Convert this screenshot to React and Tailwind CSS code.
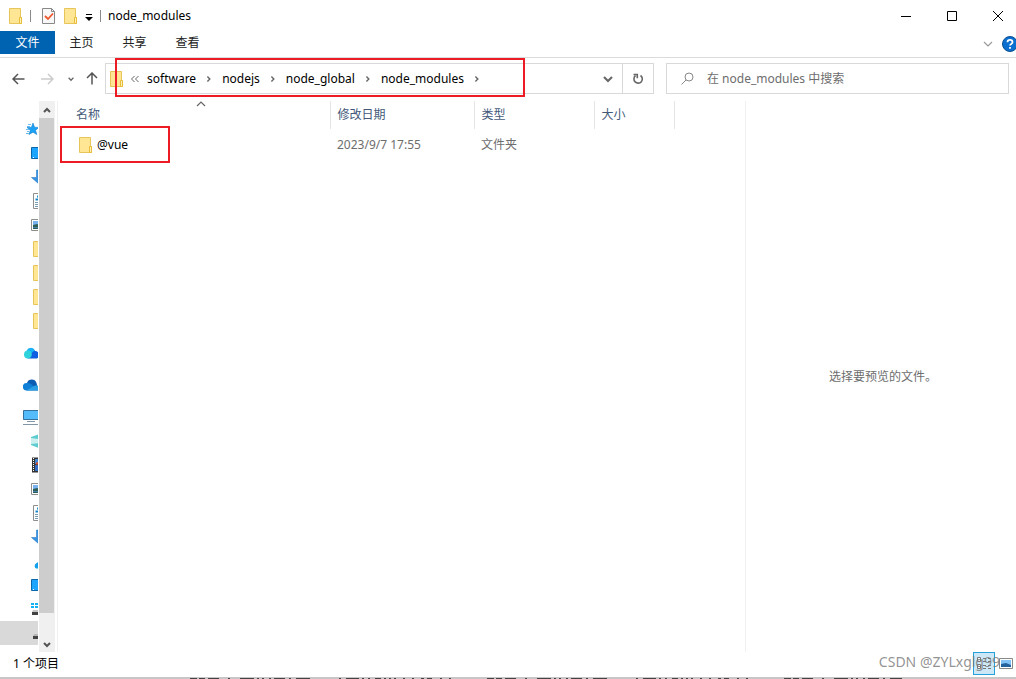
import { useState } from "react";

const crumbs = ["software", "nodejs", "node_global", "node_modules"];

const columns = [
  { name: "名称", width: "w-68" },
  { name: "修改日期", width: "w-36" },
  { name: "类型", width: "w-30" },
  { name: "大小", width: "w-20" },
];

const files = [{ name: "@vue", date: "2023/9/7 17:55", type: "文件夹" }];

const navGroups = [
  ["star", "desktop", "download", "doc", "picture", "folder", "folder", "folder", "folder"],
  ["cloudLight"],
  ["cloudDark"],
  ["pc", "box", "video", "picture", "doc", "download", "cloudSmall", "desktop", "drive", "disk"],
];

const topLevel = ["star", "cloudLight", "cloudDark", "pc"];

function Folder({ className }) {
  return (
    <svg width="14" height="16" viewBox="0 0 14 16" className={className}>
      <path d="M.5.5h11v9h1v6H.5z" fill="#ffe694" stroke="#e8c55b" />
      <path d="M10.5 9.500h2v6h-2z" fill="#fff0b5" stroke="#e8bd3c" />
    </svg>
  );
}

function Chevron({ d = "M1 3l4 4 4-4", size = 10, stroke = "#666", weight = 1.5, className }) {
  return (
    <svg width={size} height={size} viewBox="0 0 10 10" fill="none" stroke={stroke} strokeWidth={weight} className={className}>
      <path d={d} />
    </svg>
  );
}

function NavIcon({ kind }) {
  return (
    <svg width="16" height="16" viewBox="0 0 16 16" fill="none" className="shrink-0">
      {kind === "star" && (
        <>
          <path d="M10 2l1.500 4.200 4.500.3-3.500 2.700 1.300 4.300-3.800-2.300-4 2.300 1.300-4.400L4 6.500l4.500-.3z" fill="#1aa1f5" stroke="#1382cf" strokeWidth=".6" />
          <path d="M5 3.500h3M4 5.500h3M3 8.500h3M4 10.500h2M3 12.500h3" stroke="#6cbcec" />
        </>
      )}
      {kind === "desktop" && (
        <>
          <path d="M.5 2.500h15v11H.5z" fill="#1ba5ff" stroke="#0b67ad" />
          <path d="M2 12.500h1" stroke="#fff" />
        </>
      )}
      {kind === "download" && <path d="M5.500 1h5v7.500H15L8 15 .5 8.500h5z" fill="#3a93df" stroke="#2c7ec6" strokeWidth=".6" />}
      {kind === "doc" && (
        <>
          <path d="M2.500.5h11v15h-11z" fill="#fff" stroke="#8e8e8e" />
          <path d="M6 3.500h6M4.500 6.500h8" stroke="#1687c9" strokeWidth="2" />
          <path d="M4 9.500h8M4 11.500h8M4 13.500h8" stroke="#7c9eb5" />
        </>
      )}
      {kind === "picture" && (
        <>
          <path d="M.5 2.500h15v11H.5z" fill="#fff" stroke="#8e8e8e" />
          <path d="M2 4h12v8H2z" fill="#77b4ef" />
          <path d="M2 8l4-1 8 1v4H2z" fill="#315e58" />
          <path d="M2 10.500h12" stroke="#4380a8" />
        </>
      )}
      {kind === "folder" && <path d="M2.500.5h12v15h-12z" fill="#ffe694" stroke="#e8c55b" />}
      {kind === "cloudLight" && (
        <>
          <path d="M5 13.500a4 4 0 0 1-1-7.500 4.300 4.300 0 0 1 8 0 4 4 0 0 1 2 7.500z" fill="#0f5fe0" />
          <path d="M3.500 6.500a4.500 4.500 0 0 1 8.500-1c-2 1-3 2-4 3.500z" fill="#19b2f8" />
          <path d="M5 13.500a4 4 0 0 1 0-8c3 0 4.500 3 3.500 5.500-.6 1.500-2 2.500-3.500 2.500z" fill="#2fd3dc" />
        </>
      )}
      {kind === "cloudDark" && (
        <>
          <path d="M4 13.500a4 4 0 0 1 0-7.500 5 5 0 0 1 9.500 0l2 7.500z" fill="#0a5db2" />
          <path d="M3.500 13.500a3.700 3.700 0 0 1 0-7.400c3-.6 6 1.400 8 4.400z" fill="#0f7fd6" />
          <path d="M3 13.500l9-5a5 5 0 0 1 4 1v4z" fill="#2b9fe4" />
        </>
      )}
      {kind === "pc" && (
        <>
          <path d="M.5 1.500h17v9H.5z" fill="#55bcfb" stroke="#34719d" />
          <path d="M7 12.500h4M4 12.500h8M0 15.500h16" stroke="#8296a5" />
        </>
      )}
      {kind === "box" && (
        <>
          <path d="M0 4l8-3 8 3v8l-8 3-8-3z" fill="#5fcdd0" />
          <path d="M0 5l8 1 8-1v6l-8-1-8 1z" fill="#cdeff0" />
        </>
      )}
      {kind === "video" && (
        <>
          <path d="M1 .5h14v15H1z" fill="#333" />
          <path d="M2.500 1v14" stroke="#fff" strokeDasharray="1 1" />
          <path d="M4 2h9v5H4z" fill="#4282cb" />
          <path d="M4 8h9v6H4z" fill="#3168c0" />
          <path d="M5 6.500h4" stroke="#e34b2e" strokeWidth="2" />
        </>
      )}
      {kind === "cloudSmall" && <path d="M5 15.500a3 3 0 0 1 0-5 5 5 0 0 1 7 0v5z" fill="#12a0ee" />}
      {kind === "drive" && (
        <>
          <path d="M0 2h3v2H0zM4 2h3v2H4zM0 5h3v2H0zM4 5h3v2H4z" fill="#12b2f5" />
          <path d="M2 9h12l1 2H1z" fill="#c5c5c5" />
          <path d="M1 11h14v3H1z" fill="#424242" />
        </>
      )}
      {kind === "disk" && (
        <>
          <path d="M3 9h11l1 2H2z" fill="#b8b8b8" />
          <path d="M2 11h13v3H2z" fill="#444" />
        </>
      )}
    </svg>
  );
}

function TitleBar() {
  return (
    <header className="flex h-[31px] shrink-0 items-center pl-[9px]">
      <Folder className="mr-[7px]" />
      <span className="mr-[10px] h-3 w-px bg-[#8a8a8a]" />
      <button aria-label="属性" className="mr-[7px]">
        <svg width="16" height="16" viewBox="0 0 16 16" fill="none">
          <path d="M1.500.5h9l3 3v12h-12z" fill="#f8f8f8" stroke="#888" />
          <path d="M10.500.5v3h3" stroke="#888" />
          <path d="M4 8l3 3L12 5.500" stroke="#f0562b" strokeWidth="1.800" />
        </svg>
      </button>
      <button aria-label="新建文件夹" className="mr-[7px]">
        <Folder />
      </button>
      <button aria-label="自定义快速访问工具栏" className="mr-[7px]">
        <svg width="8" height="8" viewBox="0 0 8 8" className="mt-1">
          <path d="M1 0h6v1H1zM0 3h8L4 7z" />
        </svg>
      </button>
      <span className="mr-[7px] h-3 w-px bg-[#8a8a8a]" />
      <h1>node_modules</h1>
      <div className="-mr-[5px] ml-auto flex h-full">
        <button aria-label="最小化" className="flex w-[46px] items-center justify-center">
          <svg width="10" height="10" stroke="#000"><path d="M0 5.500h10" /></svg>
        </button>
        <button aria-label="最大化" className="flex w-[46px] items-center justify-center">
          <svg width="10" height="10" fill="none" stroke="#000"><path d="M.5.5h9v9h-9z" /></svg>
        </button>
        <button aria-label="关闭" className="flex w-[46px] items-center justify-center">
          <svg width="10" height="10" stroke="#000"><path d="M0 0l10 10M10 0L0 10" /></svg>
        </button>
      </div>
    </header>
  );
}

function Ribbon() {
  return (
    <nav className="flex h-[27px] shrink-0 border-b border-[#dadbdc] pb-[3px] text-[#222]">
      <button className="w-[55px] bg-[#0063b1] pt-px text-white">文件</button>
      <button className="w-[53px] pt-px">主页</button>
      <button className="w-[53px] pt-px">共享</button>
      <button className="w-[53px] pt-px">查看</button>
      <div className="ml-auto flex items-center gap-2 overflow-hidden pt-[2px]">
        <button aria-label="展开功能区">
          <Chevron stroke="#999" weight={1.2} />
        </button>
        <button aria-label="帮助" className="-mr-[3px]">
          <svg width="18" height="16" viewBox="0 0 18 16">
            <circle cx="9" cy="8" r="7.500" fill="#0a6fce" stroke="#084f93" />
            <path d="M6.500 6.200c0-3 5-3 5 0 0 1.800-2.500 1.600-2.500 3.400M9 11v1.800" fill="none" stroke="#fff" strokeWidth="1.800" />
          </svg>
        </button>
      </div>
    </nav>
  );
}

function AddressRow() {
  const [query, setQuery] = useState("");

  return (
    <div className="flex h-[42px] shrink-0 items-center pr-[7px] pb-px">
      <div className="flex w-[105px] shrink-0 items-center pl-3">
        <button aria-label="后退" className="mr-4">
          <svg width="13" height="12" fill="none" stroke="#555" strokeWidth="1.500"><path d="M12.500 6H1M6 1L1 6l5 5" /></svg>
        </button>
        <button aria-label="前进" className="mr-[14px]" disabled>
          <svg width="13" height="12" fill="none" stroke="#ccc" strokeWidth="1.500"><path d="M0 6h12M7 1l5 5-5 5" /></svg>
        </button>
        <button aria-label="最近位置" className="mr-3">
          <Chevron size={6} weight={2.2} />
        </button>
        <button aria-label="上移">
          <svg width="12" height="13" fill="none" stroke="#555" strokeWidth="1.500"><path d="M6 12.500V1M1 6l5-5 5 5" /></svg>
        </button>
      </div>
      <div className="relative flex h-[31px] flex-1 items-center border border-[#d9d9d9] pl-1">
        <Folder />
        <button aria-label="上级位置" className="mr-2 ml-[7px]">
          <svg width="8" height="8" viewBox="0 0 8 8" fill="none" stroke="#666"><path d="M3.500 1l-3 3 3 3M7.500 1l-3 3 3 3" /></svg>
        </button>
        {crumbs.map(c => (
          <span key={c} className="flex items-center">
            <button>{c}</button>
            <Chevron d="M3 2l3 3-3 3" size={8} weight={1.8} className="mx-[9px]" />
          </span>
        ))}
        <button aria-label="以前的位置" className="ml-auto px-[9px]">
          <Chevron weight={2} />
        </button>
        <button aria-label="刷新" className="flex h-full w-[31px] items-center justify-center border-l border-[#d9d9d9]">
          <svg width="12" height="12" viewBox="0 0 12 12" fill="none" stroke="#666" strokeWidth="1.600">
            <path d="M8.500 2.500a4.200 4.200 0 1 1-5 .2M1.500 1.500h3.800v3.800" />
          </svg>
        </button>
        <span className="pointer-events-none absolute -top-[6px] left-[9px] h-[39px] w-[410px] border-2 border-[#ed1c24]" />
      </div>
      <label className="ml-3 flex h-[31px] w-[34%] shrink-0 items-center border border-[#d9d9d9] pl-[14px]">
        <svg width="13" height="13" viewBox="0 0 13 13" fill="none" stroke="#888" className="mr-[13px]">
          <circle cx="8" cy="5" r="4" />
          <path d="M5 8L.5 12.500" />
        </svg>
        <input
          aria-label="搜索"
          placeholder="在 node_modules 中搜索"
          value={query}
          onChange={e => setQuery(e.target.value)}
          className="min-w-0 flex-1 outline-none placeholder:text-[#6d6d6d]"
        />
      </label>
    </div>
  );
}

function NavPane() {
  return (
    <aside className="flex shrink-0 border-r border-[#f0f0f0]">
      <div className="flex w-[39px] flex-col gap-2 overflow-hidden pt-4 pr-px">
        {navGroups.map((group, g) => (
          <ul key={g}>
            {group.map((kind, i) => (
              <li
                key={i}
                className={`flex h-6 items-center overflow-hidden ${topLevel.includes(kind) ? "pl-[23px]" : "pl-[31px]"} ${kind === "disk" ? "bg-[#d9d9d9]" : ""}`}
              >
                <NavIcon kind={kind} />
              </li>
            ))}
          </ul>
        ))}
      </div>
      <div className="mr-[2px] flex w-4 flex-col bg-[#f0f0f0]">
        <button aria-label="向上滚动" className="flex h-[17px] items-center justify-center pr-px">
          <Chevron d="M2 7l3-3 3 3" weight={2} stroke="#555" />
        </button>
        <div className="mr-px flex-1 bg-[#cdcdcd]" />
        <div className="h-[23px]" />
        <button aria-label="向下滚动" className="flex h-4 items-center justify-center pr-px">
          <Chevron d="M2 4l3 3 3-3" weight={2} stroke="#555" />
        </button>
      </div>
    </aside>
  );
}

function FileList() {
  return (
    <main className="flex-1 border-r border-[#f0f0f0]">
      <table className="table-fixed border-collapse">
        <thead>
          <tr className="h-7 text-[#44597a]">
            {columns.map((c, i) => (
              <th
                key={c.name}
                className={`relative border-r border-[#e5e5e5] text-left font-normal ${c.width} ${i === 0 ? "pl-[18px]" : "pl-[7px]"}`}
              >
                {c.name}
                {i === 0 && <Chevron d="M1 6l4-4 4 4" weight={1.2} className="absolute -top-px left-[138px]" />}
              </th>
            ))}
          </tr>
        </thead>
        <tbody>
          {files.map(f => (
            <tr key={f.name} className="h-8 text-[#6d6d6d]">
              <td className="relative pl-[21px] text-black">
                <span className="flex items-center gap-1">
                  <Folder />
                  {f.name}
                </span>
                <span className="pointer-events-none absolute -top-[3px] left-[2px] h-[37px] w-[110px] border-2 border-[#ed1c24]" />
              </td>
              <td className="pl-[7px]">{f.date}</td>
              <td className="pl-[7px]">{f.type}</td>
              <td />
            </tr>
          ))}
        </tbody>
      </table>
    </main>
  );
}

function StatusBar() {
  return (
    <footer className="relative flex h-[25px] shrink-0 items-center pr-[3px] pb-[2px] pl-[13px]">
      <span>1 个项目</span>
      <div className="ml-auto flex items-center">
        <button aria-label="详细信息" className="flex h-[23px] w-[22px] items-center justify-center border border-[#26a0da] bg-[#cce8f6]">
          <svg width="16" height="15" viewBox="0 0 16 15" fill="none" stroke="#777">
            <path d="M1.500 1.500h3v4h-3zM1.500 8.500h3v4h-3z" fill="#fff" />
            <path d="M7 2.500h3M12 2.500h3M7 5.500h3M12 5.500h3M7 9.500h3M12 9.500h3M7 12.500h3M12 12.500h3" />
            <path d="M2.500 10.500h1" stroke="#e34b2e" />
          </svg>
        </button>
        <button aria-label="大缩略图" className="ml-1">
          <svg width="14" height="12" viewBox="0 0 14 12">
            <path d="M.5.5h13v10H.5z" fill="#fff" stroke="#888" />
            <path d="M2 2h10v7H2z" fill="#83c2f4" />
            <path d="M2 6l5-1 5 2v2H2z" fill="#24619d" />
          </svg>
        </button>
      </div>
      <span className="pointer-events-none absolute right-4 bottom-[5px] text-[14px] leading-5 text-[#777]/80">CSDN @ZYLxglg99</span>
    </footer>
  );
}

// sliver of the page behind the window
function Backdrop() {
  return (
    <div className="h-[2px] shrink-0 overflow-hidden bg-[#c8c6c6] px-[190px]">
      <svg width="712" height="2" stroke="#444">
        <path
          d="M0 1.500h712"
          strokeDasharray="7 2 6 3 11 9 2 10 14 3 2 3 2 5 2 3 11 4 2 5 14 29 2 5 13 3 2 4 2 5 6 3 2 3 2 3 2 7 2 7 2 7 3 3 5 8 2 7 2 36"
        />
      </svg>
    </div>
  );
}

export default function App() {
  return (
    <div className="flex h-screen flex-col overflow-hidden bg-white font-['Noto_Sans','Noto_Sans_CJK_SC',sans-serif] text-[12px] leading-4 text-black">
      <TitleBar />
      <Ribbon />
      <AddressRow />
      <div className="flex min-h-0 flex-1 pt-px">
        <NavPane />
        <FileList />
        <section className="flex w-[270px] shrink-0 items-center justify-center pl-1 text-[#6d6d6d]">选择要预览的文件。</section>
      </div>
      <StatusBar />
      <Backdrop />
    </div>
  );
}
